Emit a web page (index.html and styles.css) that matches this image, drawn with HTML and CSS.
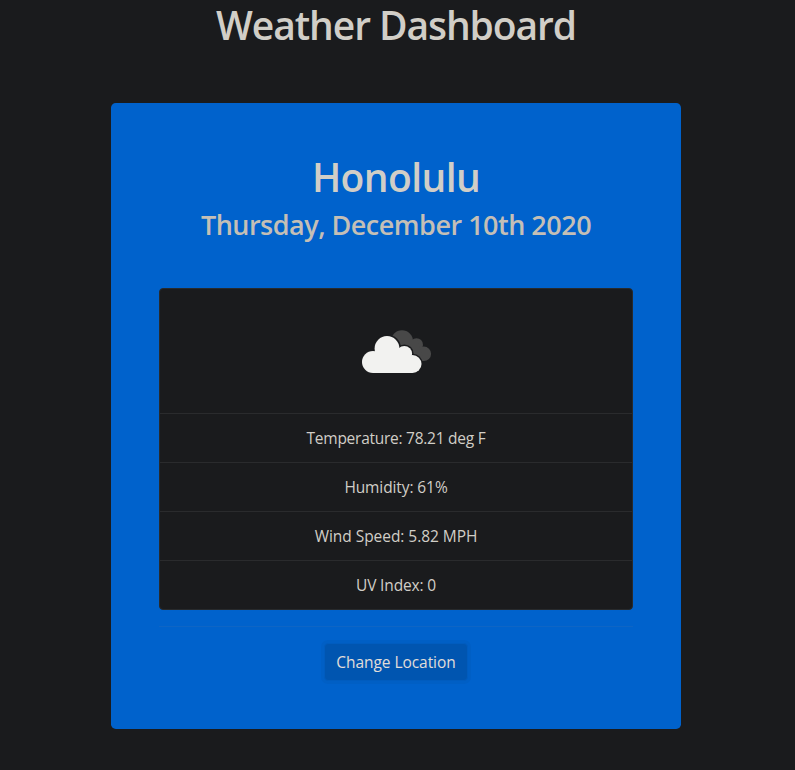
FILE: index.html
```html
<!DOCTYPE html>
<html lang="en">
<head>
<meta charset="utf-8">
<title>Weather Dashboard</title>
<link rel="stylesheet" href="styles.css">
</head>
<body>
<h1 class="page-title">Weather Dashboard</h1>
<main class="card">
  <h2 class="city">Honolulu</h2>
  <h3 class="date">Thursday, December 10th 2020</h3>
  <ul class="list">
    <li class="icon-row">
      <svg width="100" height="100" viewBox="346 301 100 100" aria-hidden="true">
        <g fill="#484848"><circle cx="402" cy="341.200" r="11"/><circle cx="416.500" cy="344.700" r="6.500"/><circle cx="423.800" cy="353.800" r="7.300"/><path d="M402 340h15l7 21H409z"/></g>
        <g fill="#1a1b1d"><circle cx="387" cy="348.500" r="14"/><circle cx="404.300" cy="353.700" r="9.300"/><circle cx="412.500" cy="364" r="10.300"/></g>
        <g fill="#f2f2f0"><circle cx="373" cy="362" r="11"/><circle cx="387" cy="348.500" r="12.400"/><circle cx="404.300" cy="353.700" r="7.800"/><circle cx="412.500" cy="364" r="9"/><path d="M375 351h30l7.500 8v14H373z"/></g>
      </svg>
    </li>
    <li class="temp">Temperature: 78.21 deg F</li>
    <li class="humidity">Humidity: 61%</li>
    <li class="wind">Wind Speed: 5.82 MPH</li>
    <li class="uv">UV Index: 0</li>
  </ul>
  <hr class="rule">
  <button class="button" type="button">Change Location</button>
</main>
</body>
</html>
```
FILE: styles.css
```css
* { box-sizing: border-box; }
body {
  margin: 0;
  background: #1a1b1d;
  color: #d1cec7;
  font: 400 15.5px/24px "Open Sans", "Noto Sans", sans-serif;
  text-align: center;
}
h1, h2, h3 { margin: 0; font-weight: 600; }
.page-title { width: 792px; height: 103px; font-size: 39px; line-height: 50px; letter-spacing: -1.08px; }
.card {
  width: 570px;
  height: 626px;
  margin-left: 111px;
  padding: 48px;
  border-radius: 4.800px;
  background: #0062cc;
}
.city { height: 56px; font-size: 39px; line-height: 52px; letter-spacing: -0.600px; }
.date { height: 81px; font-size: 27px; line-height: 36px; letter-spacing: -0.500px; color: #c4bfb6; }
.list {
  height: 322px;
  margin: 0;
  padding: 0;
  list-style: none;
  border: 1px solid #282a2c;
  border-radius: 4px;
  background: #1a1b1d;
}
.list li { height: 49px; padding: 12px 20px; border-bottom: 1px solid #2a2b2d; }
.list li:last-child { border-bottom: 0; }
.list .icon-row { height: 125px; }
.icon-row svg { display: block; margin: 0 auto; }
.list .temp { letter-spacing: -0.260px; }
.list .humidity { letter-spacing: -0.100px; }
.list .wind { letter-spacing: -0.050px; }
.list .uv { letter-spacing: -0.150px; }
.rule { height: 1px; margin: 16px 0; border: 0; background: #0e65c5; }
.button {
  display: block;
  width: 144px;
  height: 38px;
  margin: 0 auto;
  padding: 0;
  border: 1px solid #005cbf;
  border-radius: 4px;
  background: #0055b0;
  box-shadow: 0 0 0 3px #005fc5;
  color: #e0ded9;
  font: inherit;
  letter-spacing: -0.060px;
}
```
